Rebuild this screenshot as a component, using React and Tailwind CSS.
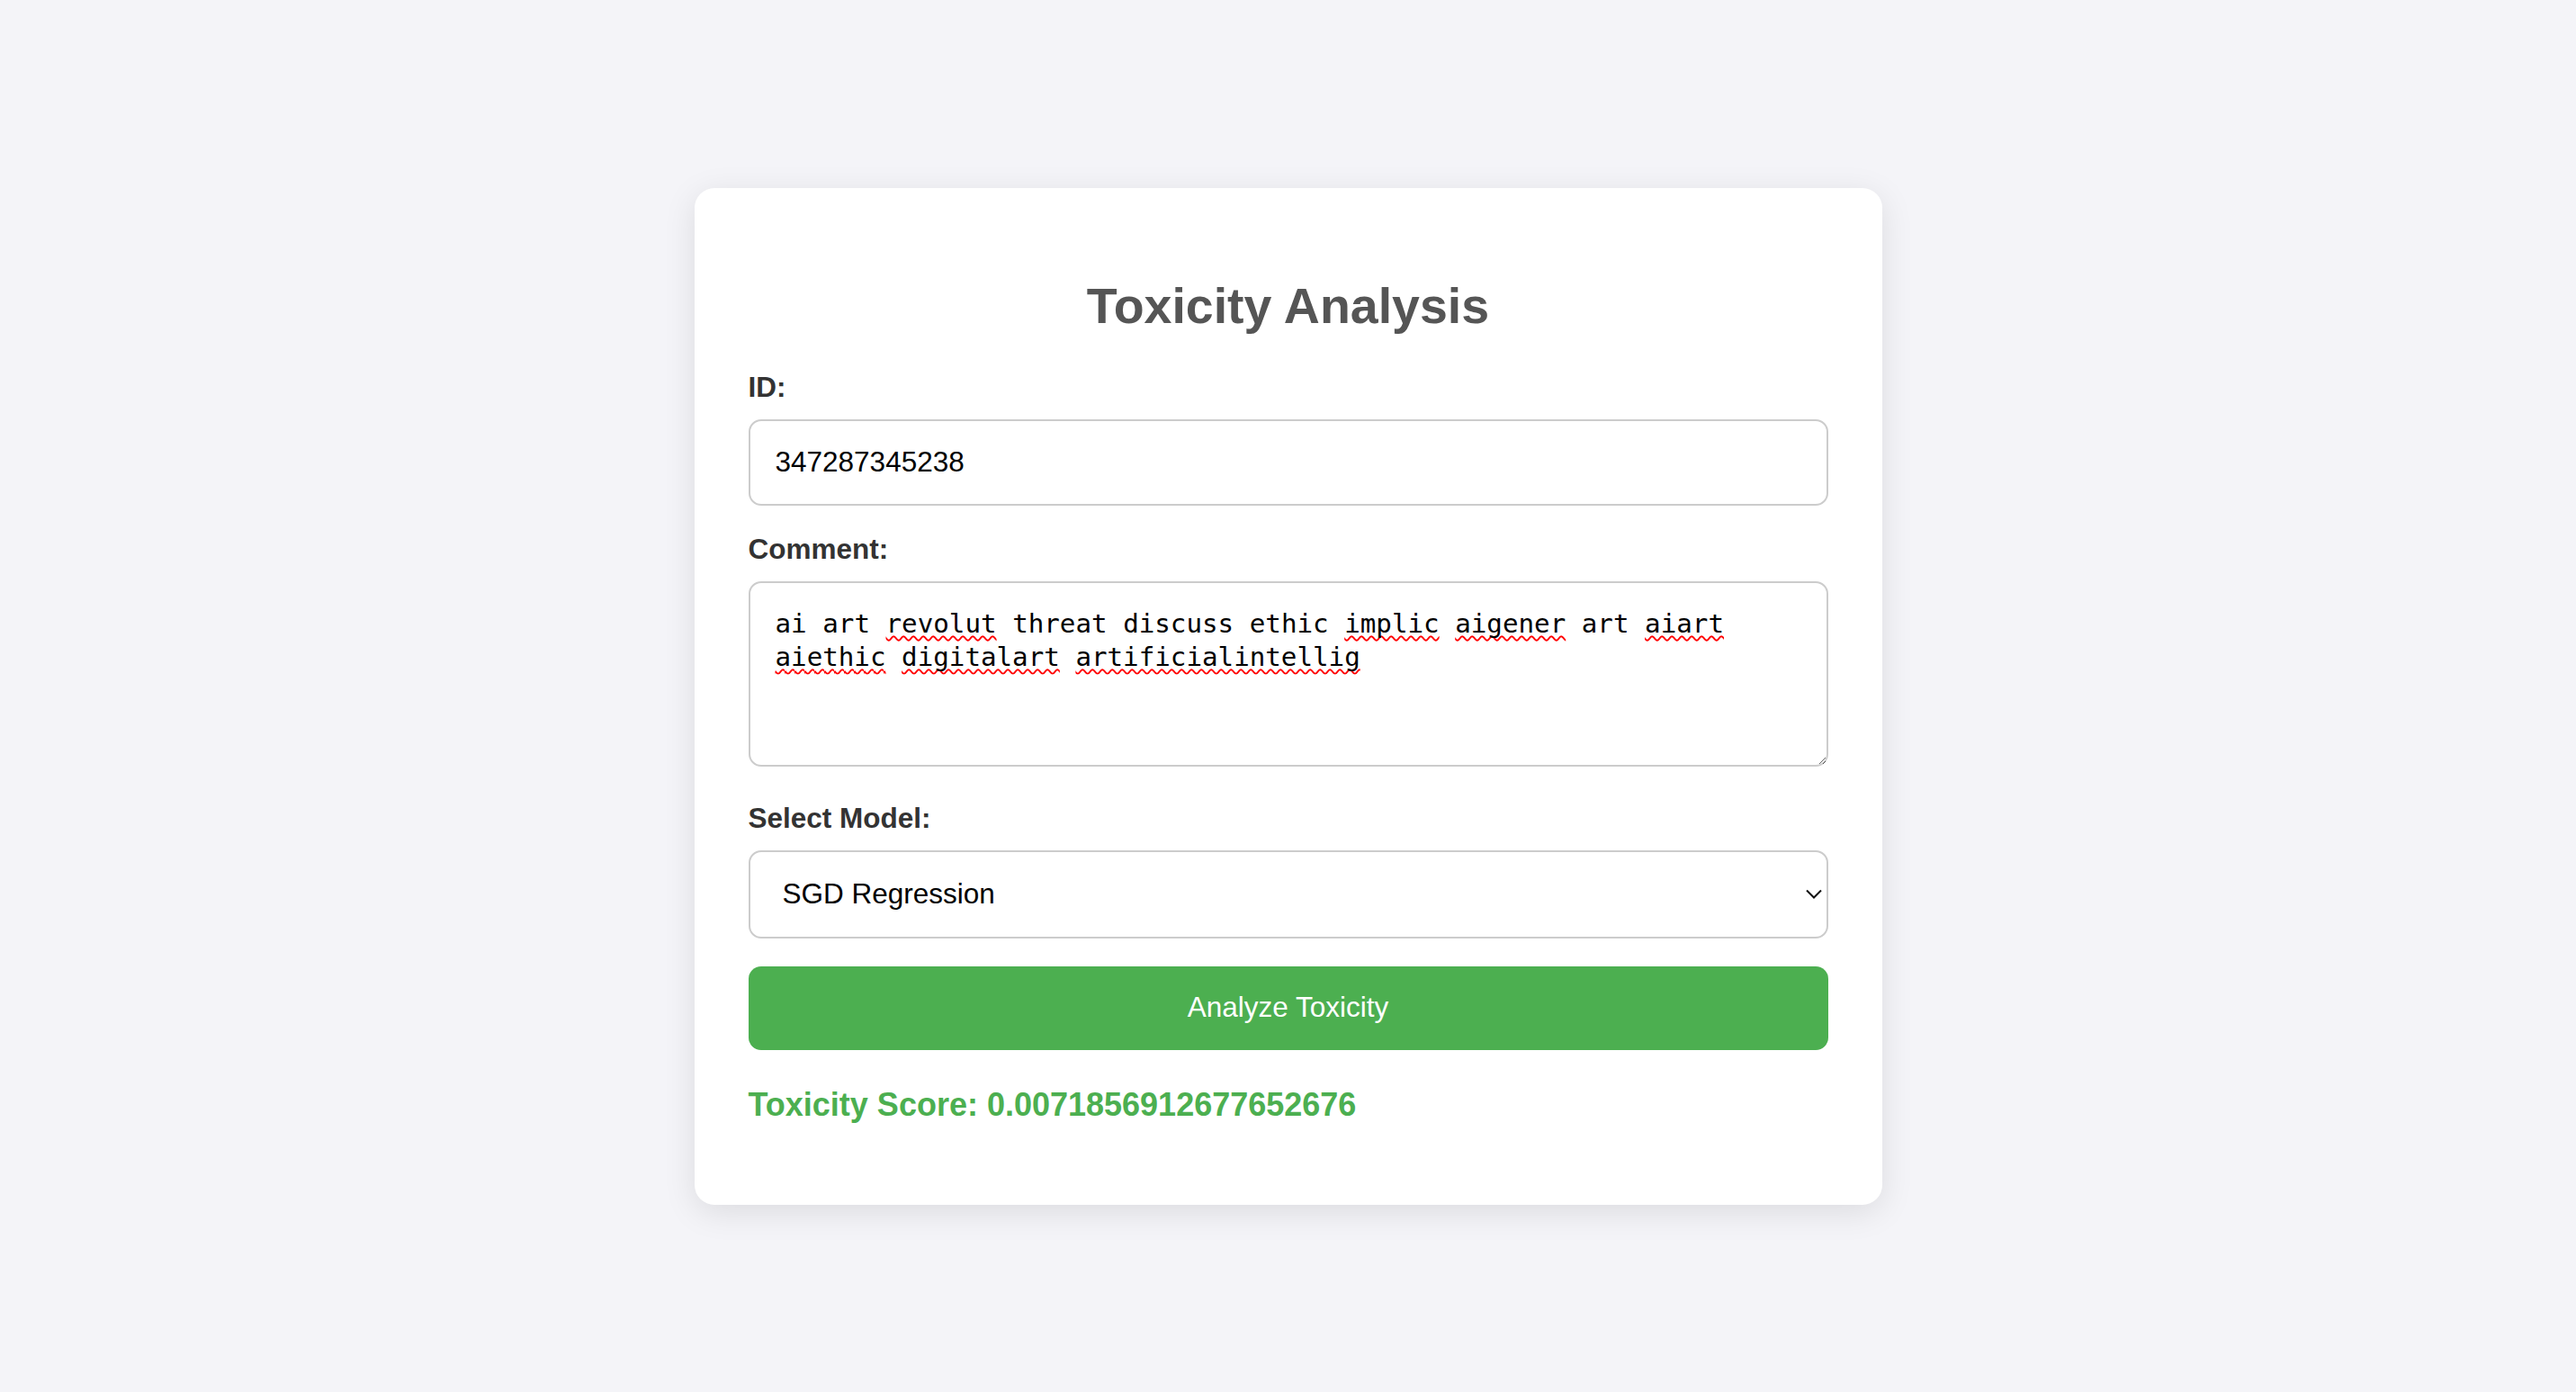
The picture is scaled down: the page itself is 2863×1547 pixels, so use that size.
import React, { useState } from 'react';

const flagged = new Set(['revolut', 'implic', 'aigener', 'aiart', 'aiethic', 'digitalart', 'artificialintellig']);
const comment = 'ai art revolut threat discuss ethic implic aigener art aiart aiethic digitalart artificialintellig';

const App = () => {
  const [id, setId] = useState('347287345238');
  const [model, setModel] = useState('sgd');

  return (
    <div className="min-h-screen bg-[#f4f4f8] flex items-center justify-center font-['Liberation_Sans',Arial,sans-serif]">
      <div className="w-[1320px] bg-white rounded-[22px] shadow-[0_8px_36px_rgba(0,0,0,0.1)] px-[60px] pt-[99px] pb-[90px]">
        <h2 className="text-[55.5px] leading-[64px] font-bold text-[#555] text-center">Toxicity Analysis</h2>

        <label htmlFor="id" className="block mt-[40px] text-[31.5px] leading-[36px] font-bold text-[#333]">ID:</label>
        <input
          id="id"
          value={id}
          onChange={(e) => setId(e.target.value)}
          className="block w-full mt-[18px] h-[96px] px-[28px] border-2 border-[#ccc] rounded-[14px] bg-white text-[31.5px] text-black outline-none"
        />

        <label className="block mt-[30px] text-[31.5px] leading-[36px] font-bold text-[#333]">Comment:</label>
        <div
          role="textbox"
          aria-multiline="true"
          className="mt-[18px] h-[206px] w-full resize overflow-auto border-2 border-[#ccc] rounded-[14px] px-[28px] pt-[27.6px] pb-[28px] font-['DejaVu_Sans_Mono',monospace] text-[29.2px] leading-[36.5px] text-black"
        >
          {comment.split(' ').map((w, i) => (
            <React.Fragment key={i}>
              {i > 0 && ' '}
              {flagged.has(w) ? (
                <span className="underline decoration-wavy decoration-[#ff0000] decoration-[2px] underline-offset-[3px] [text-decoration-skip-ink:none]">{w}</span>
              ) : (
                w
              )}
            </React.Fragment>
          ))}
        </div>

        <label htmlFor="model" className="block mt-[39px] text-[31.5px] leading-[36px] font-bold text-[#333]">Select Model:</label>
        <div className="relative mt-[18px]">
          <select
            id="model"
            value={model}
            onChange={(e) => setModel(e.target.value)}
            className="appearance-none block w-full h-[98px] pl-[36px] pr-[40px] border-2 border-[#ccc] rounded-[14px] bg-white text-[31.5px] text-black outline-none"
          >
            <option value="sgd">SGD Regression</option>
            <option value="linear">Linear Regression</option>
            <option value="ridge">Ridge Regression</option>
          </select>
          <svg
            className="pointer-events-none absolute right-[7px] top-1/2 -translate-y-1/2"
            width="18"
            height="11"
            viewBox="0 0 18 11"
            fill="none"
            stroke="#111"
            strokeWidth="2"
          >
            <path d="M1 1l8 8 8-8" />
          </svg>
        </div>

        <button className="block mt-[31px] w-full h-[93px] bg-[#4caf50] rounded-[14px] text-white text-[31.5px]">
          Analyze Toxicity
        </button>

        <p className="mt-[40px] text-[36px] leading-[42px] font-bold text-[#4caf50]">
          Toxicity Score: 0.0071856912677652676
        </p>
      </div>
    </div>
  );
};

export default App;
